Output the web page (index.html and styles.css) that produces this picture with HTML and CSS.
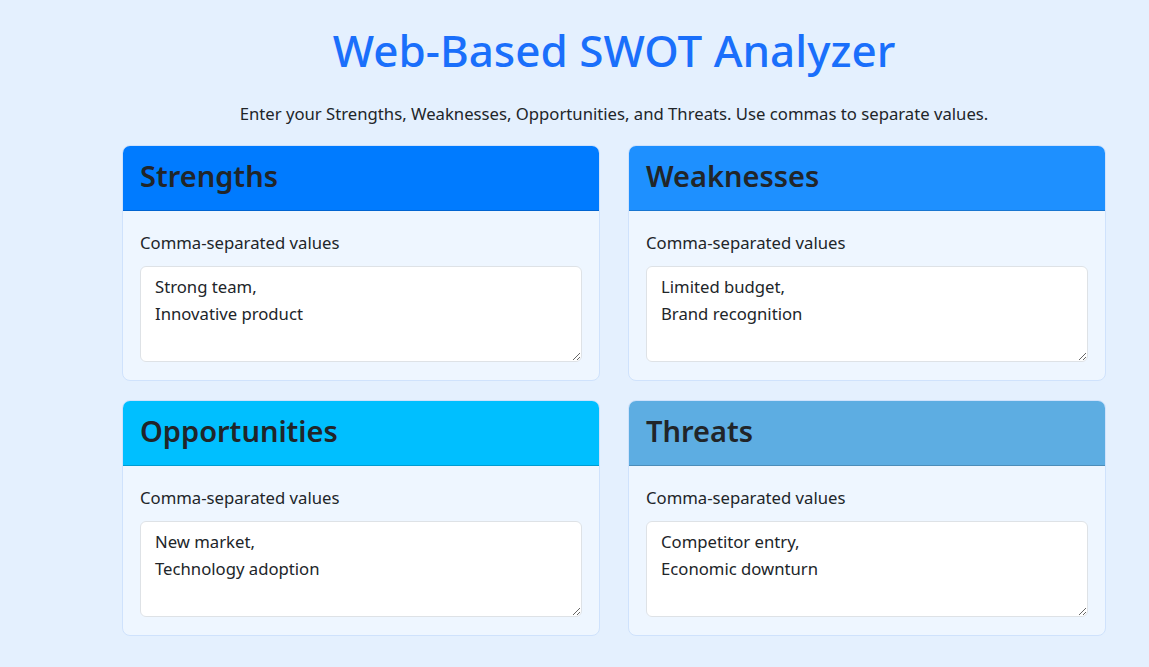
FILE: index.html
```html
<!DOCTYPE html>
<html lang="en">
<head>
<meta charset="utf-8">
<title>Web-Based SWOT Analyzer</title>
<link rel="stylesheet" href="styles.css">
</head>
<body>
<main class="page">
  <h1 class="title">Web-Based SWOT Analyzer</h1>
  <p class="lead">Enter your Strengths, Weaknesses, Opportunities, and Threats. Use commas to separate values.</p>
  <section class="grid">
    <div class="card">
      <div class="card-header strengths"><h2>Strengths</h2></div>
      <div class="card-body">
        <label class="label" for="s">Comma-separated values</label>
        <textarea id="s" class="field">Strong team,
Innovative product</textarea>
      </div>
    </div>
    <div class="card">
      <div class="card-header weaknesses"><h2>Weaknesses</h2></div>
      <div class="card-body">
        <label class="label" for="w">Comma-separated values</label>
        <textarea id="w" class="field">Limited budget,
Brand recognition</textarea>
      </div>
    </div>
    <div class="card">
      <div class="card-header opportunities"><h2>Opportunities</h2></div>
      <div class="card-body">
        <label class="label" for="o">Comma-separated values</label>
        <textarea id="o" class="field">New market,
Technology adoption</textarea>
      </div>
    </div>
    <div class="card">
      <div class="card-header threats"><h2>Threats</h2></div>
      <div class="card-body">
        <label class="label" for="t">Comma-separated values</label>
        <textarea id="t" class="field">Competitor entry,
Economic downturn</textarea>
      </div>
    </div>
  </section>
</main>
</body>
</html>
```

FILE: styles.css
```css
* { box-sizing: border-box; }
html, body { margin: 0; padding: 0; }
body {
  background: #e4f0fe;
  font-family: "Noto Sans", "Open Sans", sans-serif;
  color: #212529;
  font-size: 16.7px;
}
.page {
  width: 984px;
  margin-left: 122px;
  padding-top: 19px;
}
.title {
  margin: 0;
  text-align: center;
  color: #1a6ffb;
  font-size: 44px;
  font-weight: 500;
  line-height: 62px;
}
.lead {
  margin: 21px 0 0;
  text-align: center;
  font-size: 16.7px;
  line-height: 24px;
}
.grid {
  margin-top: 19px;
  display: grid;
  grid-template-columns: 478px 478px;
  column-gap: 28px;
  row-gap: 19px;
}
.card {
  background: #eef6ff;
  border: 1px solid #cfe2fc;
  border-radius: 8px;
  overflow: hidden;
}
.card-header {
  height: 65px;
  padding: 0 17px 5px;
  display: flex;
  align-items: center;
  border-bottom: 1px solid rgba(0,0,0,0.18);
}
.card-header h2 {
  margin: 0;
  font-size: 29px;
  font-weight: 600;
  color: #212529;
  line-height: 1;
}
.strengths { background: #007bff; }
.weaknesses { background: #1e90ff; }
.opportunities { background: #00bfff; }
.threats { background: #5dade2; }
.card-body {
  padding: 20px 17px 18px;
}
.label {
  display: block;
  font-size: 16.7px;
  line-height: 24px;
  margin-bottom: 11px;
}
.field {
  display: block;
  width: 100%;
  height: 96px;
  border: 1px solid #dee2e6;
  border-radius: 6px;
  background: #fff;
  padding: 6px 14px;
  font-family: inherit;
  font-size: 16.7px;
  line-height: 27px;
  color: #212529;
  resize: vertical;
}
```
